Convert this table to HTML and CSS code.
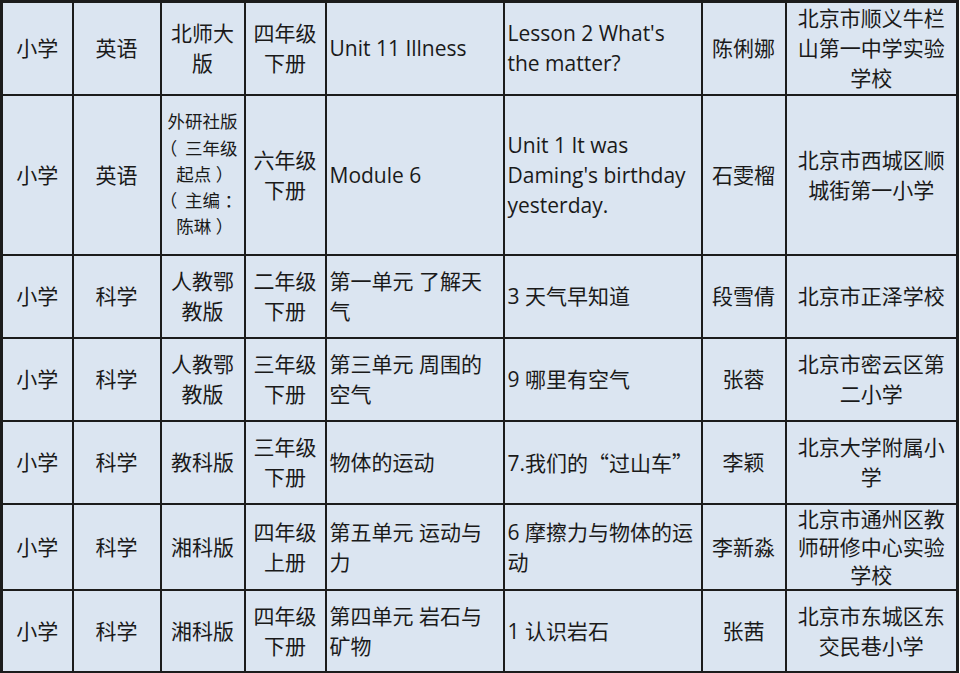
FILE: index.html
```html
<!DOCTYPE html>
<html lang="zh-CN">
<head>
<meta charset="utf-8">
<title>课例列表</title>
<link rel="stylesheet" href="styles.css">
</head>
<body>
<table class="grid">
  <colgroup>
    <col class="c1"><col class="c2"><col class="c3"><col class="c4"><col class="c5"><col class="c6"><col class="c7"><col class="c8">
  </colgroup>
  <tbody>
    <tr class="r1">
      <td>小学</td><td>英语</td><td>北师大版</td><td>四年级下册</td>
      <td class="left">Unit 11 Illness</td>
      <td class="left">Lesson 2 What's the matter?</td>
      <td>陈俐娜</td><td>北京市顺义牛栏山第一中学实验学校</td>
    </tr>
    <tr class="r2">
      <td>小学</td><td>英语</td><td class="small">外研社版<br><span class="pk open">（</span>三年级<br>起点<span class="pk">）</span><br><span class="pk open">（</span>主编<span class="pk">：</span><br>陈琳<span class="pk">）</span></td><td>六年级下册</td>
      <td class="left">Module 6</td>
      <td class="left">Unit 1 It was Daming's birthday yesterday.</td>
      <td>石雯榴</td><td>北京市西城区顺城街第一小学</td>
    </tr>
    <tr class="rn">
      <td>小学</td><td>科学</td><td>人教鄂教版</td><td>二年级下册</td>
      <td class="left">第一单元 了解天气</td>
      <td class="left">3 天气早知道</td>
      <td>段雪倩</td><td>北京市正泽学校</td>
    </tr>
    <tr class="rn">
      <td>小学</td><td>科学</td><td>人教鄂教版</td><td>三年级下册</td>
      <td class="left">第三单元 周围的空气</td>
      <td class="left">9 哪里有空气</td>
      <td>张蓉</td><td>北京市密云区第二小学</td>
    </tr>
    <tr class="rn">
      <td>小学</td><td>科学</td><td>教科版</td><td>三年级下册</td>
      <td class="left">物体的运动</td>
      <td class="left">7.我们的<span class="cjk">“</span>过山车<span class="cjk">”</span></td>
      <td>李颖</td><td>北京大学附属小学</td>
    </tr>
    <tr class="rn">
      <td>小学</td><td>科学</td><td>湘科版</td><td>四年级上册</td>
      <td class="left">第五单元 运动与力</td>
      <td class="left">6 摩擦力与物体的运动</td>
      <td>李新淼</td><td class="tight">北京市通州区教师研修中心实验学校</td>
    </tr>
    <tr class="rn">
      <td>小学</td><td>科学</td><td>湘科版</td><td>四年级下册</td>
      <td class="left">第四单元 岩石与矿物</td>
      <td class="left">1 认识岩石</td>
      <td>张茜</td><td>北京市东城区东交民巷小学</td>
    </tr>
  </tbody>
</table>
</body>
</html>
```
FILE: styles.css
```css
html, body {
  margin: 0;
  padding: 0;
  background: #ffffff;
}

body {
  width: 960px;
  height: 673px;
  overflow: hidden;
}

.grid {
  border-collapse: collapse;
  table-layout: fixed;
  width: 958px;
  background: #dbe5f1;
  border: 3px solid #1c1c1c;
  font-family: "Open Sans", "Noto Sans CJK SC", sans-serif;
  font-size: 21px;
  line-height: 30px;
  color: #1a1a1a;
  text-spacing-trim: space-all;
}

.c1 { width: 71px; }
.c2 { width: 88px; }
.c3 { width: 84px; }
.c4 { width: 81px; }
.c5 { width: 178px; }
.c6 { width: 198px; }
.c7 { width: 84px; }
.c8 { width: 172px; }

.grid td {
  border: 2px solid #1c1c1c;
  padding: 0 5px;
  text-align: center;
  vertical-align: middle;
  overflow: hidden;
}

.grid td.left {
  text-align: left;
  padding: 0 2px 0 3px;
}

.grid td.small {
  font-size: 17.5px;
  line-height: 25.3px;
  padding: 0 2px;
}

.grid td.tight {
  line-height: 28px;
}

.cjk {
  font-family: "Noto Sans CJK SC", sans-serif;
}

.pk {
  display: inline-block;
  width: 1em;
  text-align: center;
  font-family: "Noto Sans CJK SC", sans-serif;
  font-feature-settings: "halt" 1;
}

.pk.open {
  text-align: left;
  text-indent: 1px;
}

.r1 { height: 93px; }
.r2 { height: 160px; }
.rn { height: 83px; }
```
